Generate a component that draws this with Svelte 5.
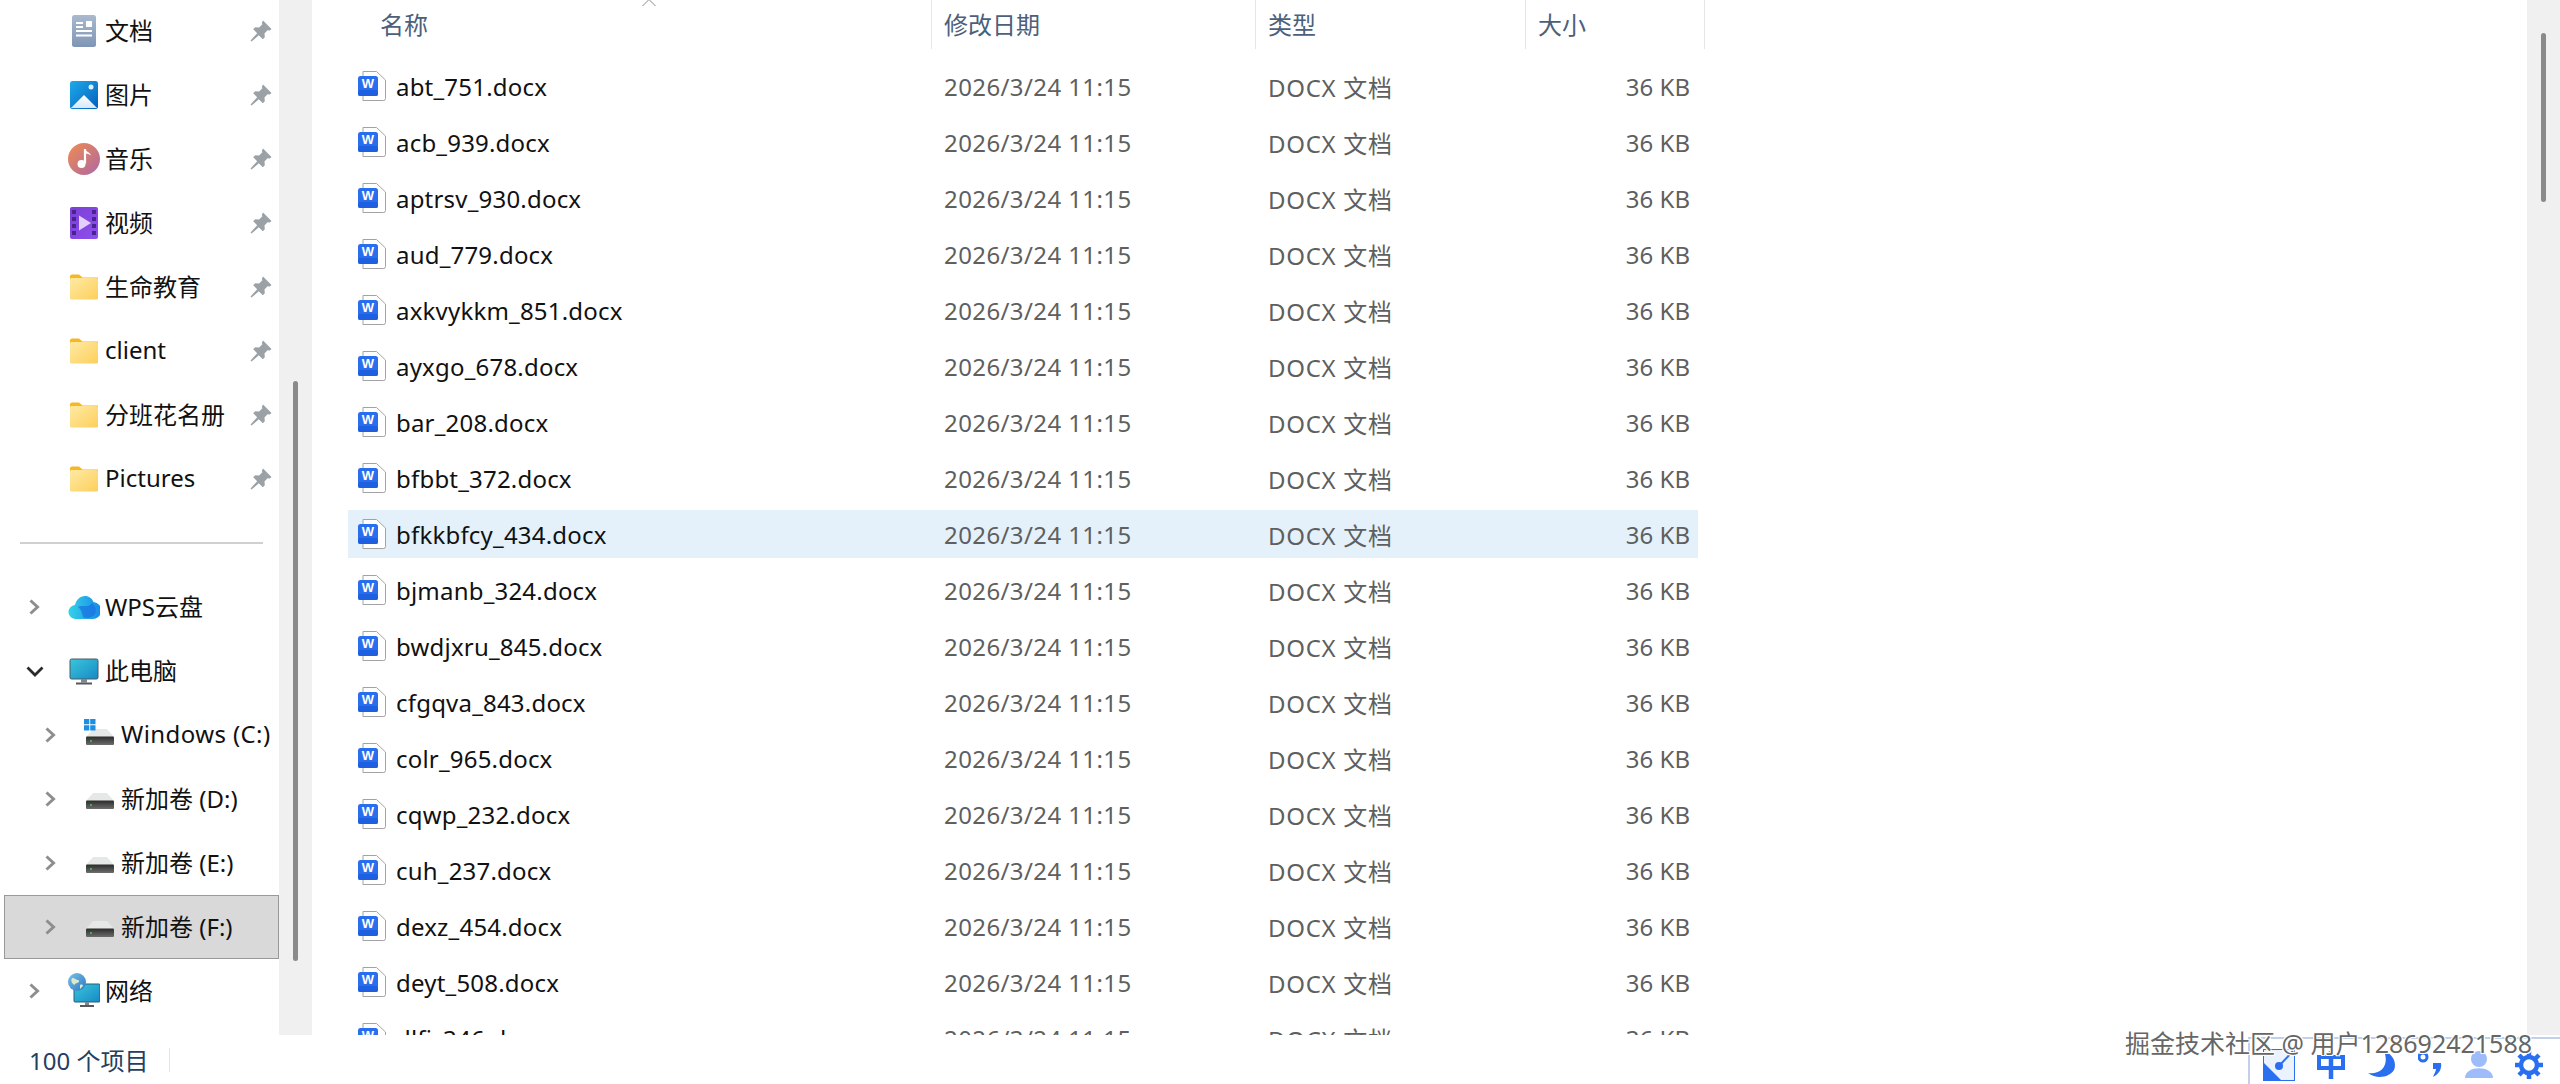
<script>
	const pinned = [
		{ name: '文档', icon: 'doc' },
		{ name: '图片', icon: 'pic' },
		{ name: '音乐', icon: 'music' },
		{ name: '视频', icon: 'video' },
		{ name: '生命教育', icon: 'folder' },
		{ name: 'client', icon: 'folder' },
		{ name: '分班花名册', icon: 'folder' },
		{ name: 'Pictures', icon: 'folder' }
	];

	const drives = [
		{ name: 'Windows (C:)', win: true },
		{ name: '新加卷 (D:)' },
		{ name: '新加卷 (E:)' },
		{ name: '新加卷 (F:)', selected: true }
	];

	const files = [
		'abt_751', 'acb_939', 'aptrsv_930', 'aud_779', 'axkvykkm_851', 'ayxgo_678',
		'bar_208', 'bfbbt_372', 'bfkkbfcy_434', 'bjmanb_324', 'bwdjxru_845', 'cfgqva_843',
		'colr_965', 'cqwp_232', 'cuh_237', 'dexz_454', 'deyt_508', 'dlfj_346'
	];
</script>

{#snippet chevron(open)}
	<svg class="chev" viewBox="0 0 20 20" width="20" height="20">
		{#if open}
			<path d="M2.500 6.500l7.500 7.500 7.500-7.500" fill="none" stroke="#2b2b2b" stroke-width="2.800" />
		{:else}
			<path d="M5.500 3.500l7 6.500-7 6.500" fill="none" stroke="#8e8e8e" stroke-width="3" />
		{/if}
	</svg>
{/snippet}

{#snippet pin()}
	<svg class="pin" viewBox="0 0 22 22" width="22" height="22">
		<path d="M13 .5l8.500 8.500-2.200 1.700-1.500-.6-3.300 3.300.3 3.900-2 2-4-4L1.500 21.500l-1-1 6.700-7.300-4-4 2-2 3.900.3 3.300-3.300-.6-1.500z" fill="#9aa1a7" />
	</svg>
{/snippet}

{#snippet navIcon(kind)}
	<svg class="nav-icon" viewBox="0 0 32 36" width="32" height="36">
		{#if kind === 'doc'}
			<rect x="4" y="2" width="24" height="32" rx="2.500" fill="url(#docGrad)" />
			<path d="M8 10h7M8 14h7M8 18h16M8 22.500h16" stroke="#fff" stroke-width="2" />
			<rect x="18" y="8" width="6" height="6" fill="#fff" />
		{:else if kind === 'pic'}
			<rect x="2" y="4" width="28" height="28" rx="2.500" fill="url(#picGrad)" />
			<path d="M3 31l13-13 13 13z" fill="url(#snowGrad)" />
			<circle cx="23" cy="10" r="2.500" fill="#dff1fc" />
		{:else if kind === 'music'}
			<circle cx="16" cy="18" r="16" fill="url(#musicGrad)" />
			<path d="M17 8v14.500" stroke="#fff" stroke-width="2.200" />
			<path d="M17 8c1 3 5 3 6 6.500-2-1.500-4-2-6-2z" fill="#fff" />
			<circle cx="13.500" cy="23" r="4" fill="#fff" />
		{:else if kind === 'video'}
			<rect x="2" y="2" width="28" height="32" rx="2" fill="url(#videoGrad)" />
			<path d="M4 5h4v4H4zM4 12h4v4H4zM4 19h4v4H4zM4 26h4v4H4zM24 5h4v4h-4zM24 12h4v4h-4zM24 19h4v4h-4zM24 26h4v4h-4z" fill="#46258f" />
			<path d="M11 10.500l12 7.500-12 7.500z" fill="#e3d0fb" />
		{:else if kind === 'folder'}
			<path d="M2 7.500a2 2 0 012-2h7l3.500 3H30v4H2z" fill="#f6b626" />
			<rect x="2" y="9" width="28" height="21.500" rx="1.500" fill="url(#folderGrad)" />
		{:else if kind === 'cloud'}
			<path d="M8 30a7 7 0 01-1-14c1-5 5-9 10-9 4 0 7 2.500 8.500 6A8.500 8.500 0 0124 30z" fill="url(#cloudGrad)" />
			<path d="M10 18c4-3 10 2 14-4 3 3 5 6 3 11-3 4-8 5-12 3-1-4-2-8-5-10z" fill="#1a6fe0" opacity=".7" />
		{:else if kind === 'pc'}
			<rect x="2" y="6" width="28" height="20" rx="1.500" fill="url(#pcGrad)" stroke="#4b5a66" stroke-width="1" />
			<rect x="13" y="26" width="6" height="3.500" fill="#80868c" />
			<rect x="8" y="29.500" width="16" height="2" fill="#55595e" />
		{:else if kind === 'net'}
			<rect x="6" y="11" width="26" height="18" rx="1" fill="url(#pcGrad)" stroke="#23607e" stroke-width="1" />
			<rect x="17" y="29" width="4" height="3" fill="#80868c" />
			<rect x="12" y="32" width="14" height="2" fill="#55595e" />
			<circle cx="9" cy="9" r="9" fill="url(#globeGrad)" />
			<path d="M4 5c3 0 4 2 6 2s1 3-1 3-2 3-4 1-2-4-1-6zM12 12c2-1 3 0 3 1l-3 3z" fill="#dbe9d0" />
		{/if}
	</svg>
{/snippet}

{#snippet drive(win)}
	<svg class="nav-icon" viewBox="0 0 32 36" width="32" height="36">
		<path d="M2 20l7-8h14l7 8z" fill="#e6e8e8" />
		<rect x="2" y="19.500" width="28" height="8.500" rx="1" fill="url(#driveGrad)" />
		<circle cx="7" cy="24" r="1" fill="#41d04a" />
		{#if win}
			<path d="M0 2h5.300v5.300H0zM6.200 2h5.300v5.300H6.200zM0 8.200h5.300v5.300H0zM6.200 8.200h5.300v5.300H6.200z" fill="#1b8fe3" />
		{/if}
	</svg>
{/snippet}

{#snippet wordIcon()}
	<svg class="word" viewBox="0 0 30 30" width="30" height="30">
		<path d="M6 .5h13.500L28.500 9v18.500a2 2 0 01-2 2H6z" fill="#fff" stroke="#a3a3a3" />
		<rect x="1" y="5" width="20" height="20" rx="2.500" fill="#2a6ef0" />
		<rect x="1" y="19" width="20" height="6" rx="2" fill="#1f60e0" />
		<text x="11" y="16.500" class="word-w">W</text>
	</svg>
{/snippet}

<div class="window">
	<svg class="defs" width="0" height="0">
		<defs>
			<linearGradient id="docGrad" x1="0" y1="0" x2="0" y2="1"><stop offset="0" stop-color="#a9b9cf" /><stop offset="1" stop-color="#7f96b4" /></linearGradient>
			<linearGradient id="picGrad" x1="0" y1="0" x2="1" y2="1"><stop offset="0" stop-color="#1eaaea" /><stop offset="1" stop-color="#0560bb" /></linearGradient>
			<linearGradient id="snowGrad" x1="0" y1="0" x2="0" y2="1"><stop offset="0" stop-color="#fff" /><stop offset="1" stop-color="#d5e9f8" /></linearGradient>
			<linearGradient id="musicGrad" x1="0" y1="0" x2="1" y2="1"><stop offset="0" stop-color="#f08c50" /><stop offset="1" stop-color="#ad67a5" /></linearGradient>
			<linearGradient id="videoGrad" x1="0" y1="0" x2="1" y2="1"><stop offset="0" stop-color="#7b3fd4" /><stop offset="1" stop-color="#8f4ff0" /></linearGradient>
			<linearGradient id="folderGrad" x1="0" y1="0" x2="1" y2="1"><stop offset="0" stop-color="#ffeaa3" /><stop offset="1" stop-color="#fccf5c" /></linearGradient>
			<linearGradient id="cloudGrad" x1="0" y1="0" x2="1" y2="0"><stop offset="0" stop-color="#34d3e8" /><stop offset="1" stop-color="#1787ea" /></linearGradient>
			<linearGradient id="pcGrad" x1="0" y1="0" x2="1" y2="1"><stop offset="0" stop-color="#3bc6dc" /><stop offset="1" stop-color="#1689c4" /></linearGradient>
			<linearGradient id="globeGrad" x1="0" y1="0" x2="1" y2="1"><stop offset="0" stop-color="#7cc2ea" /><stop offset="1" stop-color="#2a78c0" /></linearGradient>
			<linearGradient id="driveGrad" x1="0" y1="0" x2="0" y2="1"><stop offset="0" stop-color="#2b2b2b" /><stop offset="1" stop-color="#6d6d6d" /></linearGradient>
		</defs>
	</svg>

	<div class="main">
		<nav class="sidebar">
			{#each pinned as item}
				<div class="nav-row">
					<span class="chev-slot"></span>
					{@render navIcon(item.icon)}
					<span class="nav-label">{item.name}</span>
					{@render pin()}
				</div>
			{/each}
			<div class="nav-sep"><span></span></div>
			<div class="nav-row">
				<span class="chev-slot">{@render chevron(false)}</span>
				{@render navIcon('cloud')}
				<span class="nav-label">WPS云盘</span>
			</div>
			<div class="nav-row">
				<span class="chev-slot">{@render chevron(true)}</span>
				{@render navIcon('pc')}
				<span class="nav-label">此电脑</span>
			</div>
			{#each drives as d}
				<div class="nav-row sub" class:selected={d.selected}>
					<span class="chev-slot">{@render chevron(false)}</span>
					{@render drive(d.win)}
					<span class="nav-label" class:wide={d.win}>{d.name}</span>
				</div>
			{/each}
			<div class="nav-row">
				<span class="chev-slot">{@render chevron(false)}</span>
				{@render navIcon('net')}
				<span class="nav-label">网络</span>
			</div>
		</nav>

		<div class="track side-track"><div class="thumb"></div></div>

		<section class="pane">
			<header class="head">
				<div class="head-cell name-head">
					名称
					<svg class="sort" viewBox="0 0 14 8" width="14" height="8"><path d="M.5 7L7 .5 13.500 7" fill="none" stroke="#8a8a8a" stroke-width="1" /></svg>
				</div>
				<div class="head-cell">修改日期</div>
				<div class="head-cell">类型</div>
				<div class="head-cell">大小</div>
			</header>
			<div class="list">
				{#each files as f, i}
					<div class="file" class:hover={i === 8}>
						<div class="file-name">
							{@render wordIcon()}
							<span>{f}.docx</span>
						</div>
						<div class="cell date">2026/3/24 11:15</div>
						<div class="cell kind">DOCX 文档</div>
						<div class="cell size">36 KB</div>
					</div>
				{/each}
			</div>
		</section>

		<div class="track main-track"><div class="thumb"></div></div>
	</div>

	<footer class="status">
		<span class="count">100 个项目</span>
		<span class="status-sep"></span>
	</footer>

	<div class="ime">
		<svg viewBox="0 0 32 32" width="32" height="32">
			<rect x=".5" y=".5" width="31" height="31" fill="#eaf2fd" stroke="#2a6ff0" />
			<path d="M1 14l17 17H1z" fill="#2a6ff0" />
			<path d="M16 17L30 2" stroke="#2a6ff0" stroke-width="2" />
			<circle cx="16" cy="17" r="4" fill="#2a6ff0" />
		</svg>
		<svg viewBox="0 0 28 28" width="28" height="28">
			<rect x="2" y="6" width="24" height="11" fill="none" stroke="#2a6ff0" stroke-width="4" />
			<path d="M14 0v28" stroke="#2a6ff0" stroke-width="4.500" />
		</svg>
		<svg viewBox="0 0 28 27" width="28" height="27">
			<path d="M16 0c9 3 13 12 10 19-4 7-17 10-26 3 12 2 22-7 16-22z" fill="#2a6ff0" />
		</svg>
		<svg viewBox="0 0 24 27" width="24" height="27">
			<circle cx="5" cy="6" r="4" fill="none" stroke="#2a6ff0" stroke-width="3" />
			<path d="M15 12h8c1 6-2 11-8 14 1-3 3-6 3-8h-3z" fill="#2a6ff0" />
		</svg>
		<svg viewBox="0 0 28 27" width="28" height="27">
			<circle cx="14" cy="8" r="8" fill="#9dbcf9" />
			<path d="M0 27c0-13 28-13 28 0z" fill="#9dbcf9" />
		</svg>
		<svg viewBox="0 0 28 28" width="28" height="28">
			<circle cx="14" cy="14" r="8" fill="none" stroke="#2a6ff0" stroke-width="4.500" />
			<path d="M14 0v6M14 22v6M0 14h6M22 14h6M4 4l4.500 4.500M19.500 19.500L24 24M24 4l-4.500 4.500M8.500 19.500L4 24" stroke="#2a6ff0" stroke-width="4.500" />
		</svg>
	</div>

	<div class="watermark">掘金技术社区 @ 用户128692421588</div>
</div>

<style>
	:global(body) {
		margin: 0;
		background: #fff;
	}

	.window {
		position: relative;
		width: 2560px;
		height: 1084px;
		overflow: hidden;
		display: flex;
		flex-direction: column;
		font-family: 'Noto Sans', 'Noto Sans CJK SC', sans-serif;
		font-size: 24px;
		color: #111;
	}

	.defs {
		position: absolute;
	}

	.main {
		height: 1035px;
		display: flex;
		overflow: hidden;
	}

	.sidebar {
		width: 275px;
		padding-left: 4px;
		margin-top: -1px;
		flex: none;
	}

	.nav-row {
		height: 64px;
		box-sizing: border-box;
		display: flex;
		align-items: center;
		padding-right: 7px;
		white-space: nowrap;
	}

	.nav-row.selected {
		background: #d9d9d9;
		outline: 1px solid #999;
		outline-offset: -1px;
	}

	.chev-slot {
		width: 20px;
		height: 20px;
		margin-left: 21px;
		margin-right: 23px;
		flex: none;
	}

	.sub .chev-slot {
		margin-left: 37px;
	}

	.chev {
		display: block;
	}

	.nav-icon {
		flex: none;
		margin-right: 5px;
	}

	.nav-label {
		padding-bottom: 3px;
	}

	.nav-label.wide {
		letter-spacing: 0.4px;
	}

	.pin {
		margin-left: auto;
		flex: none;
	}

	.nav-sep {
		height: 64px;
		display: flex;
		align-items: center;
		padding-left: 16px;
	}

	.nav-sep span {
		width: 243px;
		height: 2px;
		background: #d0d0d0;
	}

	.track {
		width: 33px;
		flex: none;
		background: #f0f0f0;
		position: relative;
	}

	.side-track {
		margin-right: 4px;
	}

	.thumb {
		position: absolute;
		width: 5px;
		border-radius: 3px;
		background: #8a8a8a;
	}

	.side-track .thumb {
		left: 14px;
		top: 381px;
		height: 580px;
	}

	.main-track .thumb {
		left: 14px;
		top: 33px;
		height: 169px;
	}

	.pane {
		flex: 1;
		min-width: 0;
		overflow: hidden;
	}

	.head {
		height: 49px;
		display: grid;
		grid-template-columns: 616px 324px 270px 179px;
		width: 1389px;
		color: #4c607a;
	}

	.head-cell {
		position: relative;
		box-sizing: border-box;
		padding: 8px 0 0 12px;
		border-right: 1px solid #e5e5e5;
		line-height: 34px;
	}

	.name-head {
		padding-left: 64px;
	}

	.sort {
		position: absolute;
		left: 326px;
		top: -1px;
	}

	.list {
		padding: 13px 0 0 32px;
		display: flex;
		flex-direction: column;
		gap: 8px;
	}

	.file {
		flex: none;
		width: 1350px;
		height: 48px;
		display: grid;
		grid-template-columns: 584px 324px 270px 172px;
		align-items: center;
		color: #5f5f5f;
	}

	.file.hover {
		background: #e4f1fb;
	}

	.file-name {
		display: flex;
		align-items: center;
		padding-left: 9px;
		color: #111;
		letter-spacing: 0.2px;
	}

	.word {
		margin-right: 9px;
		flex: none;
	}

	.word-w {
		font: 700 13px 'Liberation Sans', sans-serif;
		fill: #fff;
		text-anchor: middle;
	}

	.cell {
		padding-left: 12px;
	}

	.date {
		letter-spacing: 0.4px;
	}

	.kind {
		letter-spacing: 0.7px;
	}

	.size {
		text-align: right;
		padding: 0 8px 0 0;
	}

	.status {
		height: 49px;
		display: flex;
		align-items: center;
		padding-left: 29px;
		color: #24405e;
	}

	.count {
		width: 140px;
	}

	.status-sep {
		width: 1px;
		height: 24px;
		background: #e5e5e5;
	}

	.ime {
		position: absolute;
		left: 2248px;
		top: 1037px;
		width: 312px;
		height: 47px;
		box-sizing: border-box;
		border: 2px solid #c3d0ea;
		border-right: none;
		border-bottom: none;
		background: #fff;
		display: flex;
		align-items: center;
		justify-content: space-between;
		padding: 6px 17px 0 13px;
	}

	.watermark {
		position: absolute;
		right: 28px;
		top: 1024px;
		font-size: 25px;
		line-height: 38px;
		white-space: nowrap;
		color: #666;
		text-shadow:
			1px 1px 0 #fff,
			-1px -1px 0 #fff,
			1px -1px 0 #fff,
			-1px 1px 0 #fff;
	}
</style>
